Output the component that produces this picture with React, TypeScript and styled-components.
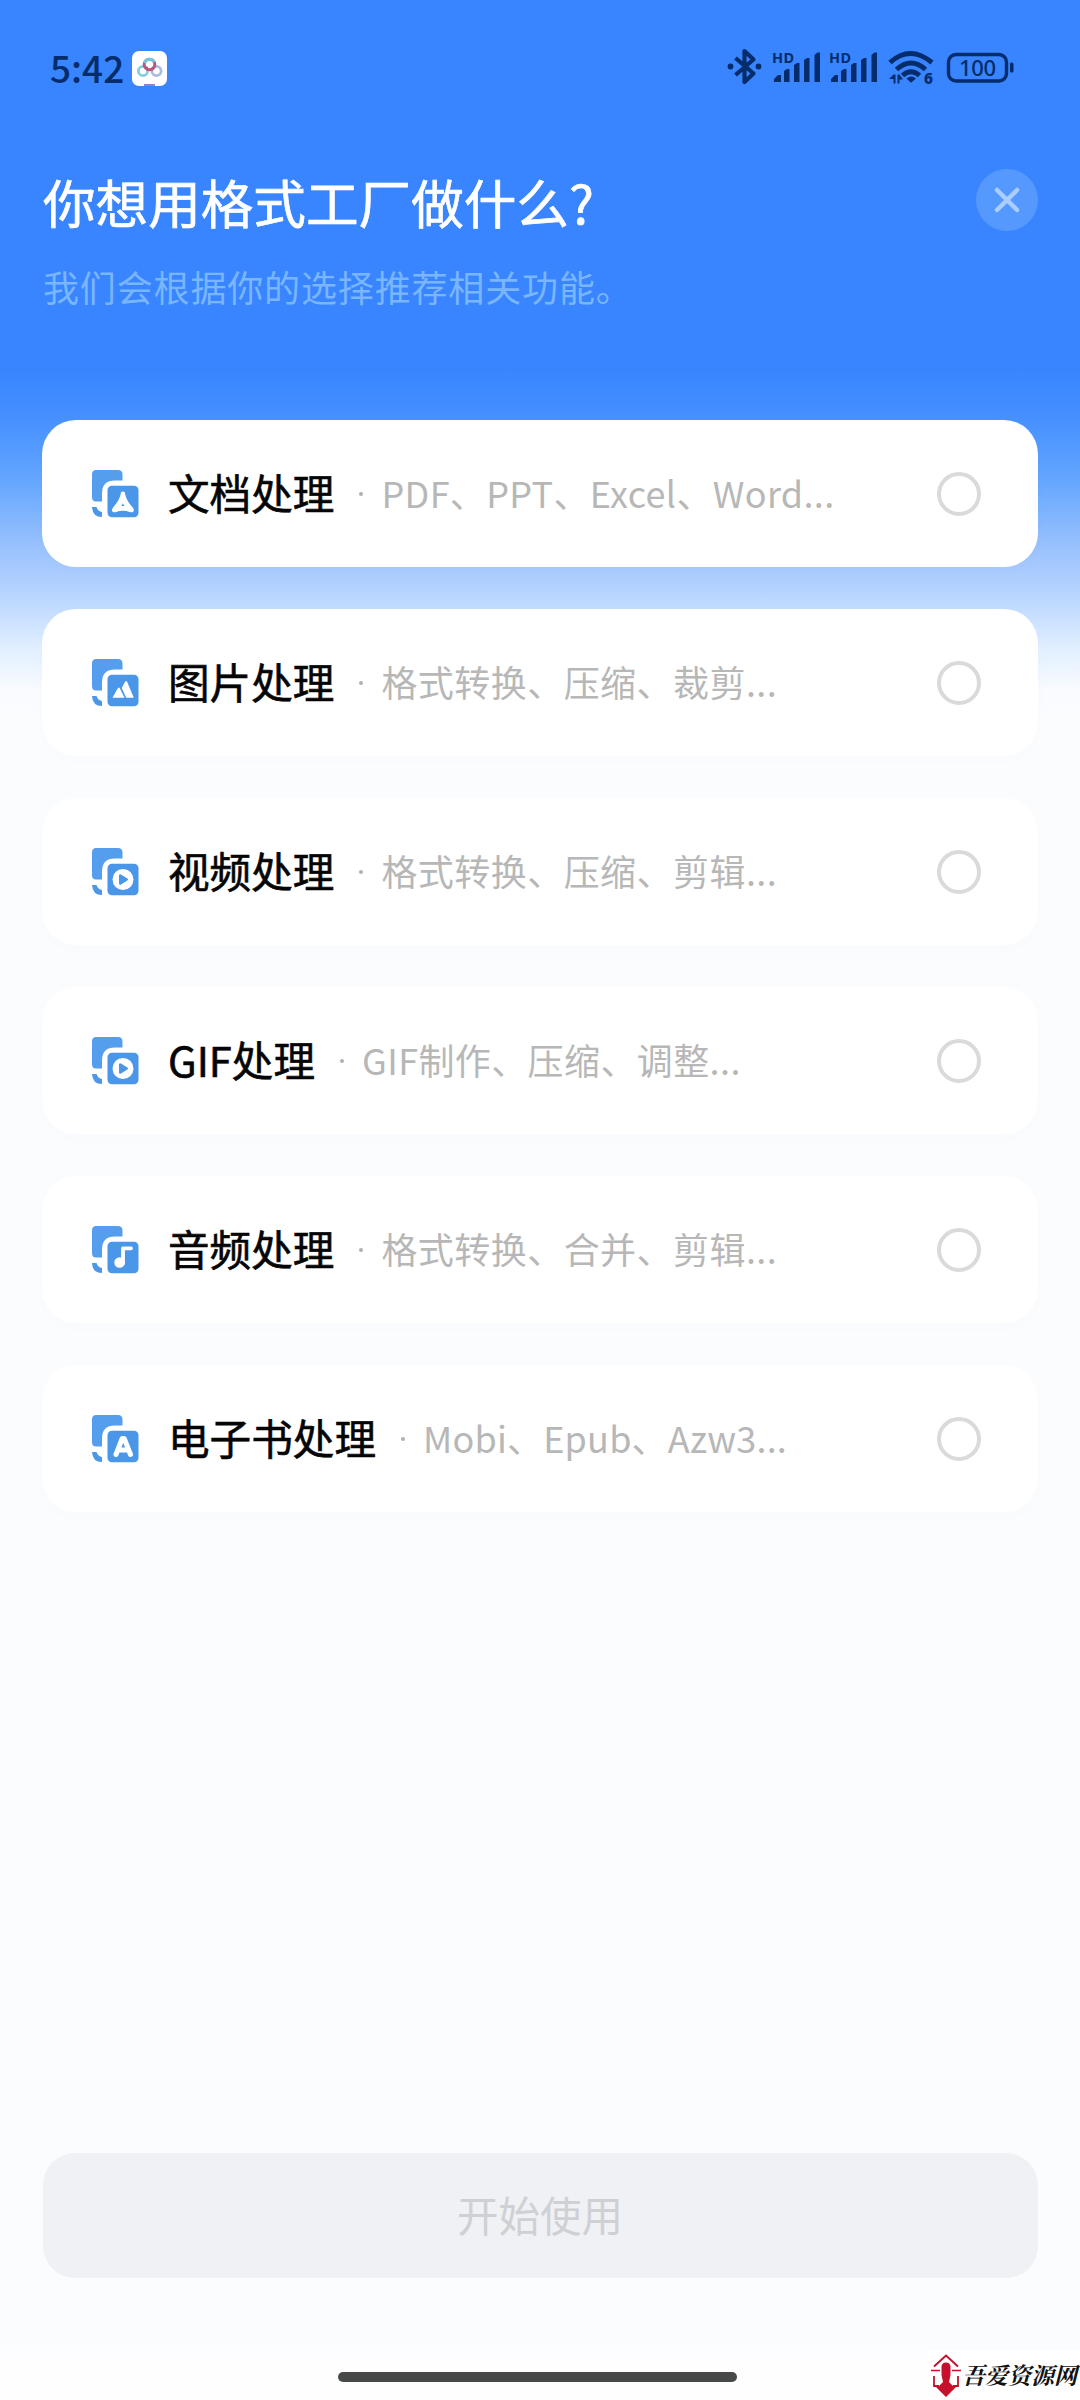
import React from "react";
import styled, { createGlobalStyle } from "styled-components";

const Global = createGlobalStyle`
  * { box-sizing: border-box; }
  body { margin: 0; background: #fbfcfe; }
`;

const Screen = styled.div`
  width: 1080px;
  height: 2400px;
  display: flex;
  flex-direction: column;
  overflow: hidden;
  font-family: "Noto Sans CJK SC", "Noto Sans", sans-serif;
  background: linear-gradient(
    180deg,
    #3885ff 0,
    #3885ff 370px,
    #4690ff 420px,
    #64a6ff 480px,
    #98c1fd 545px,
    #b4d3ff 590px,
    #e2f0ff 650px,
    #fafbff 692px,
    #fbfcfe 720px,
    #fbfcfe 2340px,
    #fefefe 2372px
  );
`;

const StatusBar = styled.header`
  height: 136px;
  padding: 0 63px 0 50px;
  display: flex;
  align-items: center;
  justify-content: space-between;
  color: #052c6b;
`;

const StatusGroup = styled.div<{ $gap: number }>`
  display: flex;
  align-items: center;
  gap: ${(p) => p.$gap}px;
`;

const Clock = styled.time`
  padding-bottom: 3px;
  font-size: 37px;
  line-height: 40px;
  font-weight: 500;
`;

const Header = styled.section`
  height: 284px;
  padding: 32px 42px 0 43px;
  display: flex;
  justify-content: space-between;
  align-items: flex-start;
`;

const Heading = styled.div`
  margin-top: -2px;
`;

const Title = styled.h1`
  margin: 0;
  font-size: 52.6px;
  line-height: 70px;
  font-weight: 400;
  -webkit-text-stroke: 0.7px #fff;
  color: #fff;
  white-space: nowrap;
`;

const Subtitle = styled.p`
  margin: 23px 0 0;
  font-size: 36px;
  letter-spacing: 0.85px;
  line-height: 54px;
  font-weight: 400;
  color: #7ab5ff;
  white-space: nowrap;
`;

const CloseButton = styled.button`
  width: 62px;
  height: 62px;
  margin-top: 1px;
  padding: 0;
  border: 0;
  border-radius: 50%;
  display: grid;
  place-items: center;
  background: #5599ff;
`;

const List = styled.main`
  padding: 0 42px;
  display: flex;
  flex-direction: column;
  gap: 42px;
  flex: 1;
`;

const Card = styled.div`
  height: 147px;
  padding: 0 57px 0 49px;
  display: flex;
  align-items: center;
  border-radius: 34px;
  background: #fff;
  box-shadow: 0 4px 20px rgba(40, 80, 160, 0.01);
`;

const Name = styled.span`
  margin-left: 29px;
  padding-bottom: 3px;
  font-size: 41.6px;
  line-height: 60px;
  font-weight: 400;
  -webkit-text-stroke: 0.6px #050505;
  color: #050505;
  white-space: nowrap;
`;

const Dot = styled.i`
  width: 4px;
  height: 4px;
  margin: 0 18px 0 25px;
  border-radius: 50%;
  background: #b0b0b0;
`;

const Detail = styled.span<{ $spacing: number }>`
  flex: 1;
  padding-bottom: 4px;
  font-size: 36px;
  letter-spacing: ${(p) => p.$spacing}px;
  line-height: 54px;
  font-weight: 400;
  color: #b7b7b7;
  white-space: nowrap;
`;

const Radio = styled.span`
  width: 44px;
  height: 44px;
  border: 4px solid #dadada;
  border-radius: 50%;
`;

const Footer = styled.footer`
  height: 247px;
  padding: 0 42px;
  display: flex;
  flex-direction: column;
  align-items: center;
`;

const StartButton = styled.button`
  width: 995px;
  height: 125px;
  flex: none;
  padding: 0 0 3px;
  border: 0;
  border-radius: 32px;
  background: #f0f1f5;
  font: 400 41.5px/60px "Noto Sans CJK SC", sans-serif;
  color: #cfd0d3;
`;

const HomeBar = styled.div`
  width: 399px;
  height: 10px;
  margin: 94px 5px 0 0;
  border-radius: 5px;
  background: #474949;
`;

const Watermark = styled.div`
  position: absolute;
  left: 928px;
  top: 2350px;
  width: 152px;
  height: 50px;
  display: flex;
  align-items: center;
  gap: 1px;
  padding-left: 3px;
  background: #fff;
`;

const WatermarkText = styled.span`
  font-family: "Noto Serif CJK SC", "Noto Sans CJK SC", serif;
  font-size: 23px;
  line-height: 30px;
  font-weight: 700;
  font-style: italic;
  color: #111;
  white-space: nowrap;
`;

type Kind = "doc" | "image" | "play" | "music" | "book";

function Glyph({ kind }: { kind: Kind }) {
  switch (kind) {
    case "doc":
      return (
        <path
          fillRule="evenodd"
          d="M29.900 22.500q2-2 4 0c.8 6 3.400 9.500 7.800 15 2.600 3.200.4 5.600-3 4.400q-6.800-2.400-13.600 0c-3.400 1.200-5.600-1.200-3-4.400 4.400-5.500 7-9 7.800-15zM31.900 33.500l-1.600 2.600h3.200z"
          fill="#fff"
        />
      );
    case "image":
      return (
        <path
          d="M21.500 38.800 26.800 29.200q1-1.500 2 0l4.700 9.600zM35.200 38.800l-4.500-9.800 3.400-6.300q1-1.500 2 0l6.700 16.100z"
          fill="#fff"
        />
      );
    case "play":
      return (
        <>
          <circle cx="32" cy="31.500" r="10.500" fill="#fff" />
          <path
            d="M29.300 27.500v8l6.400-4z"
            fill="#4a96e8"
            stroke="#4a96e8"
            strokeWidth="2.600"
            strokeLinejoin="round"
          />
        </>
      );
    case "music":
      return (
        <>
          <circle cx="28.600" cy="36.500" r="5.300" fill="#fff" />
          <path d="M32 37V22.300h8" fill="none" stroke="#fff" strokeWidth="3.800" strokeLinecap="round" strokeLinejoin="round" />
        </>
      );
    case "book":
      return (
        <path
          d="M25 39.500 31.200 23.500h2L39.500 39.500M27.500 35h9.500"
          fill="none"
          stroke="#fff"
          strokeWidth="5"
          strokeLinecap="round"
          strokeLinejoin="round"
        />
      );
  }
}

function ItemIcon({ kind }: { kind: Kind }) {
  return (
    <svg width="48" height="48" viewBox="0 0 48 48">
      <path
        d="M5 0h22q4.500 0 4.500 4.500V10.500H24Q11 10.500 11 23.500V31.500H5Q1 31.500 1 27V4.500Q1 0 5 0z"
        fill="#559eee"
      />
      <path d="M1 37h4.500q1.500 4.500 5.500 5v5q-9.500 0-10-10z" fill="#4c97e7" />
      <rect x="16.500" y="15.800" width="31" height="31.500" rx="4.500" fill="#4a96e8" />
      <Glyph kind={kind} />
    </svg>
  );
}

function AppBadge() {
  return (
    <svg width="35" height="35" viewBox="0 0 35 35">
      <rect width="35" height="35" rx="7" fill="#fff" />
      <circle cx="11" cy="20" r="4.600" fill="none" stroke="#83cfe0" strokeWidth="2.800" />
      <circle cx="24.500" cy="20" r="4.600" fill="none" stroke="#a9bddf" strokeWidth="2.800" />
      <circle cx="17.500" cy="13.500" r="5.300" fill="none" stroke="#b9567c" strokeWidth="3" />
      <path d="M12.500 12a5.300 5.300 0 0 1 9.800-.8" fill="none" stroke="#72c9dc" strokeWidth="3" />
      <path d="m13.500 18 2.500-1.500M19.500 16.500l2 2" stroke="#b9567c" strokeWidth="3" />
      <path d="M12 33h11v2H12z" fill="#8e86bd" />
    </svg>
  );
}

const statusFont = '"Noto Sans", sans-serif';

function StatusIcons() {
  return (
    <svg width="290" height="44" viewBox="0 0 290 44" fill="#052c6b">
      {/* bluetooth */}
      <path d="m8.500 12 18 15.500-9 8.500V5l9 8.500-18 15.500" fill="none" stroke="#052c6b" strokeWidth="4.200" strokeLinejoin="round" />
      <circle cx="3.500" cy="20.500" r="2.900" />
      <circle cx="31.500" cy="20.500" r="2.900" />
      {/* cellular signal, two SIM cards */}
      {[0, 57].map((x) => (
        <g key={x} transform={`translate(${x} 0)`}>
          <text x="45" y="16.500" fontFamily={statusFont} fontSize="14.500" fontWeight="700" textLength="22">HD</text>
          <path d="M47 36v-3l4-4h3v7z" />
          <path d="M57 36V25l3-2h2.500v13z" />
          <path d="M67 36V19l3-2h2.500v19z" />
          <path d="M77 36V14l3-2h2.500v24z" />
          <path d="M87.500 36V9l3-2.500H93V36z" />
        </g>
      ))}
      {/* wifi */}
      <g fill="none" stroke="#052c6b" strokeWidth="5">
        <path d="M163 16.500q20-18 42 0" />
        <path d="M169.500 23.500q14.500-13 29 0" />
        <path d="M175.500 29.500q8.500-7.500 17 0" />
      </g>
      <path d="M179.500 32.500q4.500-4 9.500 0L184 36.800z" />
      <path d="M162 33l4.500-4.500h2v9h-2V33zM170.500 37.500v-9h2l3.500 5h-3.500v4z" />
      <text x="197" y="38" fontFamily={statusFont} fontSize="15.500" fontWeight="800">6</text>
      {/* battery */}
      <rect x="221.500" y="8.500" width="58" height="26.500" rx="7.500" fill="none" stroke="#052c6b" strokeWidth="3.400" />
      <rect x="283" y="16.500" width="3.500" height="10" rx="1.500" />
      <text x="232" y="29.500" fontFamily={statusFont} fontSize="22" fontWeight="500" textLength="37">100</text>
    </svg>
  );
}

function SiteLogo() {
  return (
    <svg width="30" height="44" viewBox="0 0 30 44" fill="none" stroke="#c4122d">
      <path d="M3 13.500 15 2.500l12 11" strokeWidth="2" />
      <path d="M0 17.500h9M21 17.500h9" strokeWidth="1.500" />
      <path d="M3 23v10h5M27 23v10h-5" strokeWidth="1.800" />
      <path d="M10.500 14q0-4.500 4.500-4.500t4.500 4.500v8l-1.500 7 4 4 5-1L15 44 3 32l5 1 4-4-1.500-7z" fill="#c4122d" stroke="none" />
    </svg>
  );
}

interface Item {
  kind: Kind;
  name: string;
  detail: string;
  spacing: number;
}

const items: Item[] = [
  { kind: "doc", name: "文档处理", detail: "PDF、PPT、Excel、Word...", spacing: 0.35 },
  { kind: "image", name: "图片处理", detail: "格式转换、压缩、裁剪...", spacing: 0.45 },
  { kind: "play", name: "视频处理", detail: "格式转换、压缩、剪辑...", spacing: 0.45 },
  { kind: "play", name: "GIF处理", detail: "GIF制作、压缩、调整...", spacing: 0.4 },
  { kind: "music", name: "音频处理", detail: "格式转换、合并、剪辑...", spacing: 0.45 },
  { kind: "book", name: "电子书处理", detail: "Mobi、Epub、Azw3...", spacing: 0.2 },
];

export default function App() {
  return (
    <Screen>
      <Global />
      <StatusBar>
        <StatusGroup $gap={8}>
          <Clock>5:42</Clock>
          <AppBadge />
        </StatusGroup>
        <StatusIcons />
      </StatusBar>
      <Header>
        <Heading>
          <Title>你想用格式工厂做什么?</Title>
          <Subtitle>我们会根据你的选择推荐相关功能。</Subtitle>
        </Heading>
        <CloseButton aria-label="关闭">
          <svg width="28" height="28" viewBox="0 0 28 28">
            <path d="m4 4 20 20M24 4 4 24" stroke="#a9ceff" strokeWidth="4.500" strokeLinecap="round" />
          </svg>
        </CloseButton>
      </Header>
      <List>
        {items.map((item) => (
          <Card key={item.name}>
            <ItemIcon kind={item.kind} />
            <Name>{item.name}</Name>
            <Dot />
            <Detail $spacing={item.spacing}>{item.detail}</Detail>
            <Radio />
          </Card>
        ))}
      </List>
      <Footer>
        <StartButton>开始使用</StartButton>
        <HomeBar />
      </Footer>
      <Watermark>
        <SiteLogo />
        <WatermarkText>吾爱资源网</WatermarkText>
      </Watermark>
    </Screen>
  );
}
